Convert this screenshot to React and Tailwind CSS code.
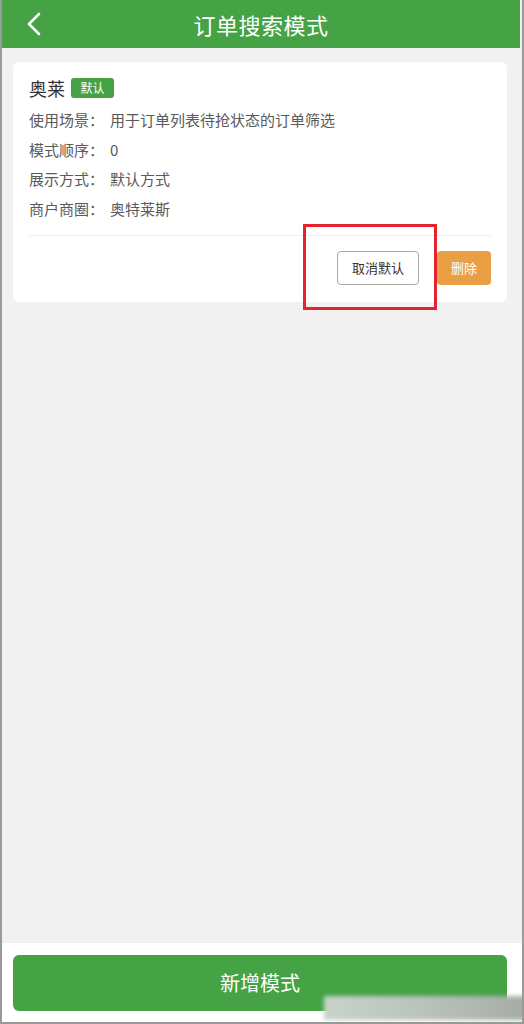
import React from "react";

const rows = [
  ["使用场景", "用于订单列表待抢状态的订单筛选"],
  ["模式顺序", "0"],
  ["展示方式", "默认方式"],
  ["商户商圈", "奥特莱斯"],
];

const App = () => {
  return (
    <div
      className="relative flex h-[1024px] w-[524px] flex-col overflow-hidden border-x-2 border-b-2 border-x-[#9a9a9a] border-b-[#9a9a9a] bg-[#f1f1f1]"
      style={{ fontFamily: '"Noto Sans CJK SC", "Noto Sans", sans-serif' }}
    >
      {/* header */}
      <div className="relative flex h-[48px] shrink-0 items-center justify-center bg-[#45a245] mr-[2px]">
        <svg className="absolute left-[24px] top-[12px]" width="16" height="24" viewBox="0 0 16 24" fill="none">
          <path d="M13 2 L3 12 L13 22" stroke="#fff" strokeWidth="2.6" strokeLinecap="round" strokeLinejoin="round" />
        </svg>
        <p className="text-[22px] leading-none text-white tracking-[0.5px]">订单搜索模式</p>
      </div>

      <div className="flex-1 pl-[11px] pr-[15px] pt-[14px]">
        <div className="rounded-[6px] bg-white px-[16px] pb-[17px] pt-[13px]">
          <div className="flex items-center gap-[6px]">
            <p className="text-[18px] leading-[26px] text-[#333]">奥莱</p>
            <span className="flex h-[20px] w-[43px] items-center justify-center rounded-[3px] bg-[#45a245] text-[12px] text-white">默认</span>
          </div>
          <div className="mt-[4px]">
            {rows.map(([k, v]) => (
              <p key={k} className="text-[15px] leading-[29.7px] text-[#5a5a5a]">
                {k}：<span className="ml-[6px]">{v}</span>
              </p>
            ))}
          </div>
          <div className="mt-[11px] border-t border-[#eeeeee]" />
          <div className="mt-[15px] flex justify-end gap-[18px]">
            <button className="h-[34px] w-[82px] rounded-[4px] border border-[#a8a8a8] bg-white text-[13px] text-[#333]">取消默认</button>
            <button className="h-[34px] w-[54px] rounded-[4px] bg-[#e9a045] text-[13px] text-white">删除</button>
          </div>
        </div>
      </div>

      {/* footer */}
      <div className="h-[79px] shrink-0 bg-white pl-[11px] pr-[15px] pt-[12px]">
        <button className="flex h-[56px] w-full items-center justify-center rounded-[6px] bg-[#45a245] text-[20px] text-white">
          新增模式
        </button>
      </div>

      {/* red annotation box */}
      <div className="absolute left-[301px] top-[224px] h-[86px] w-[134px] border-[3px] border-[#e5232f]" />

      {/* blurred watermark */}
      <div className="absolute left-[322px] top-[996px] h-[24px] w-[210px] bg-gradient-to-r from-[#c9d3c9] via-[#b9c2b9] to-[#a3aba3] blur-[2px]" />
    </div>
  );
};

export default App;
